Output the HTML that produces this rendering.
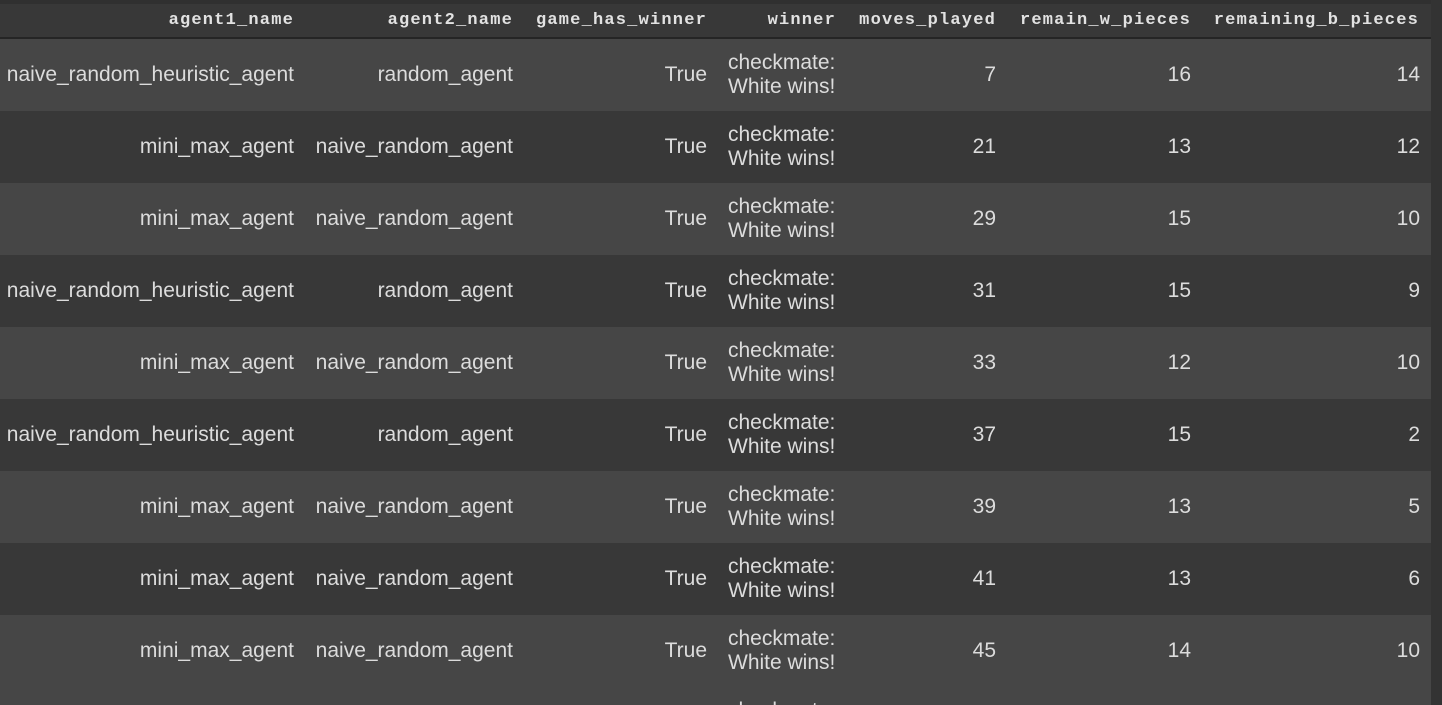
<!DOCTYPE html>
<html><head><meta charset="utf-8"><style>
html,body{margin:0;padding:0;background:#383838;width:1442px;height:705px;overflow:hidden}
.wrap{position:absolute;left:0;top:0;width:1442px;height:705px;overflow:hidden}
.sb{position:absolute;left:1431px;top:0;width:11px;height:705px;background:#333}
.top{position:absolute;left:0;top:0;width:1431px;height:4px;background:#303030}
.hdr{position:absolute;left:0;top:4px;width:1431px;height:33px;background:#383838;border-bottom:2px solid #252525}
.row{position:absolute;left:0;width:1431px;height:72px;overflow:hidden}
.c{position:absolute;top:0;height:100%;display:flex;align-items:center;justify-content:flex-end;white-space:nowrap}
.hdr .c{font-family:"Liberation Mono","DejaVu Sans Mono",monospace;font-weight:bold;font-size:17px;letter-spacing:1.2px;color:#e2e2e2;height:33px}
.row .c{font-family:"Liberation Sans",Arial,sans-serif;font-size:21px;color:#dcdcdc}
.row .w{justify-content:flex-start;text-align:left}
.w div{line-height:24px}
.last .w{align-items:flex-start;padding-top:12px;height:auto}
</style></head><body>
<div class="wrap">
<div class="top"></div>
<div class="hdr">
<div class="c" style="right:1137px">agent1_name</div>
<div class="c" style="right:918px">agent2_name</div>
<div class="c" style="right:724px">game_has_winner</div>
<div class="c" style="right:595px">winner</div>
<div class="c" style="right:435px">moves_played</div>
<div class="c" style="right:240px">remain_w_pieces</div>
<div class="c" style="right:12px">remaining_b_pieces</div>
</div>
<div id="rows"></div>
<div class="row last" style="top:687px;height:18px;background:#464646"><div class="c w" style="left:728px"><div>checkmate:<br>White wins!</div></div></div>
<div class="sb"></div>
</div>
<script>
var d=[["naive_random_heuristic_agent","random_agent",7,16,14],["mini_max_agent","naive_random_agent",21,13,12],["mini_max_agent","naive_random_agent",29,15,10],["naive_random_heuristic_agent","random_agent",31,15,9],["mini_max_agent","naive_random_agent",33,12,10],["naive_random_heuristic_agent","random_agent",37,15,2],["mini_max_agent","naive_random_agent",39,13,5],["mini_max_agent","naive_random_agent",41,13,6],["mini_max_agent","naive_random_agent",45,14,10]];
var h="";
d.forEach(function(r,i){
var top=39+i*72,bg=i%2==0?"#464646":"#383838";
h+='<div class="row" style="top:'+top+'px;background:'+bg+'">'+
'<div class="c" style="right:1137px">'+r[0]+'</div>'+
'<div class="c" style="right:918px">'+r[1]+'</div>'+
'<div class="c" style="right:724px">True</div>'+
'<div class="c w" style="left:728px"><div>checkmate:<br>White wins!</div></div>'+
'<div class="c" style="right:435px">'+r[2]+'</div>'+
'<div class="c" style="right:240px">'+r[3]+'</div>'+
'<div class="c" style="right:11px">'+r[4]+'</div></div>';
});
document.getElementById("rows").innerHTML=h;
</script>
</body></html>
